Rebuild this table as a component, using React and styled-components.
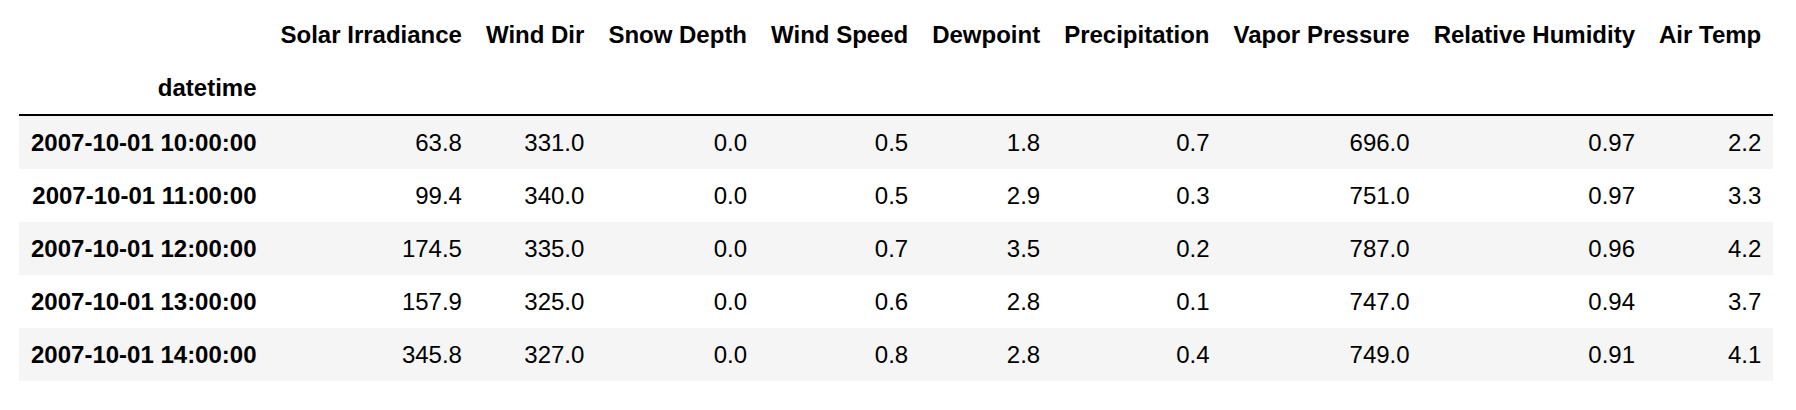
import React from "react";
import styled, { createGlobalStyle } from "styled-components";

const GlobalStyle = createGlobalStyle`
  html, body {
    margin: 0;
    padding: 0;
    background: #ffffff;
  }
  body {
    font-family: "Liberation Sans", Arial, Helvetica, sans-serif;
    color: #000000;
  }
`;

const Page = styled.div`
  padding: 8px 0 0 19px;
`;

const Table = styled.table`
  border-collapse: separate;
  border-spacing: 0;
  font-family: "Liberation Sans", Arial, Helvetica, sans-serif;
  font-size: 24px;
  color: #000000;
`;

const HeadRow = styled.tr``;

const HeaderCell = styled.th`
  text-align: right;
  vertical-align: middle;
  font-weight: 700;
  line-height: 29px;
  padding: 12px 12px;
  white-space: nowrap;
  border-bottom: ${(p) => (p.$ruled ? "2px solid #000000" : "none")};
`;

const DataRow = styled.tr`
  background: ${(p) => (p.$striped ? "#f5f5f5" : "#ffffff")};
`;

const IndexCell = styled.th`
  text-align: right;
  vertical-align: middle;
  font-weight: 700;
  line-height: 29px;
  padding: 12px 12px;
  white-space: nowrap;
`;

const DataCell = styled.td`
  text-align: right;
  vertical-align: middle;
  font-weight: 400;
  line-height: 29px;
  padding: 12px 12px;
  white-space: nowrap;
`;

const columns = [
  "Solar Irradiance",
  "Wind Dir",
  "Snow Depth",
  "Wind Speed",
  "Dewpoint",
  "Precipitation",
  "Vapor Pressure",
  "Relative Humidity",
  "Air Temp",
];

const rows = [
  ["2007-10-01 10:00:00", ["63.8", "331.0", "0.0", "0.5", "1.8", "0.7", "696.0", "0.97", "2.2"]],
  ["2007-10-01 11:00:00", ["99.4", "340.0", "0.0", "0.5", "2.9", "0.3", "751.0", "0.97", "3.3"]],
  ["2007-10-01 12:00:00", ["174.5", "335.0", "0.0", "0.7", "3.5", "0.2", "787.0", "0.96", "4.2"]],
  ["2007-10-01 13:00:00", ["157.9", "325.0", "0.0", "0.6", "2.8", "0.1", "747.0", "0.94", "3.7"]],
  ["2007-10-01 14:00:00", ["345.8", "327.0", "0.0", "0.8", "2.8", "0.4", "749.0", "0.91", "4.1"]],
];

export default function App() {
  return (
    <>
      <GlobalStyle />
      <Page>
        <Table>
          <thead>
            <HeadRow>
              <HeaderCell />
              {columns.map((c) => (
                <HeaderCell key={c}>{c}</HeaderCell>
              ))}
            </HeadRow>
            <HeadRow>
              <HeaderCell $ruled>datetime</HeaderCell>
              {columns.map((c) => (
                <HeaderCell key={c} $ruled />
              ))}
            </HeadRow>
          </thead>
          <tbody>
            {rows.map(([idx, vals], i) => (
              <DataRow key={idx} $striped={i % 2 === 0}>
                <IndexCell>{idx}</IndexCell>
                {vals.map((v, j) => (
                  <DataCell key={j}>{v}</DataCell>
                ))}
              </DataRow>
            ))}
          </tbody>
        </Table>
      </Page>
    </>
  );
}
